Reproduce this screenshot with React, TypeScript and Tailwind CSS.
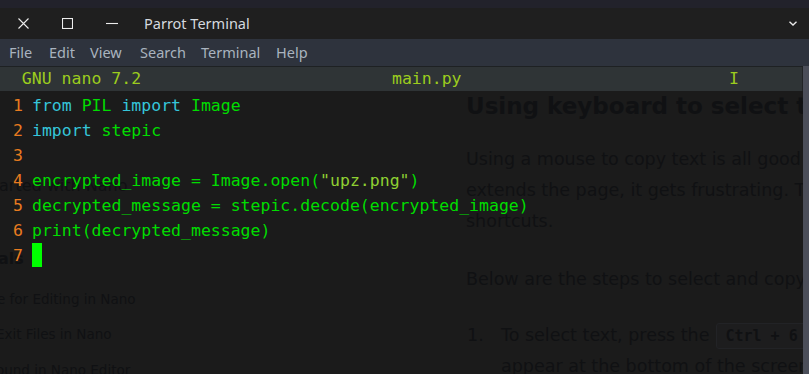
const mono = "font-['DejaVu_Sans_Mono','Liberation_Mono',monospace]";
const sans = "font-['DejaVu_Sans','Noto_Sans',sans-serif]";

type Tok = { t: string; c?: string };

const K = "text-[#35c6da]";
const G = "text-[#00dd00]";
const S = "text-[#8fd032]";

const lines: Tok[][] = [
    [{ t: "from", c: K }, { t: " PIL " }, { t: "import", c: K }, { t: " Image" }],
    [{ t: "import", c: K }, { t: " stepic" }],
    [],
    [{ t: "encrypted_image = Image.open(" }, { t: "\"upz.png\"", c: S }, { t: ")" }],
    [{ t: "decrypted_message = stepic.decode(encrypted_image)" }],
    [{ t: "print(decrypted_message)" }],
    [],
];

const BackgroundPage = () => {
    const faint = "text-[#101113]";
    return (
        <div className={`absolute inset-0 overflow-hidden flex ${sans} ${faint}`}>
            <div className="w-[466px] shrink-0 flex flex-col">
                <div className="mt-[83px] h-[24px] text-[16px] leading-[24px] ml-[-1px] whitespace-nowrap">arted with Nano</div>
                <div className="mt-[49px] text-[16px] leading-[24px] font-bold ml-[-2px]">als</div>
                <div className="mt-[16px] text-[13.5px] leading-[24px] ml-[-3px] whitespace-nowrap">e for Editing in Nano</div>
                <div className="mt-[11px] text-[13.5px] leading-[24px] ml-[-4px] whitespace-nowrap">Exit Files in Nano</div>
                <div className="mt-[12px] text-[13.5px] leading-[24px] ml-[-4px] whitespace-nowrap">ound in Nano Editor</div>
            </div>
            <div className="flex flex-col whitespace-nowrap">
                <div className="mt-[0px] text-[23px] leading-[30px] font-bold">Using keyboard to select text</div>
                <div className="mt-[23px] text-[17.5px] leading-[31px]">
                    <div>Using a mouse to copy text is all good but when the text</div>
                    <div>extends the page, it gets frustrating. That's where</div>
                    <div>shortcuts.</div>
                </div>
                <div className="mt-[27px] text-[17.5px] leading-[31px]">Below are the steps to select and copy text</div>
                <div className="mt-[25px] text-[17.5px] leading-[31px] flex">
                    <span className="w-[35px] pl-[1px]">1.</span>
                    <div className="flex flex-col">
                        <div className="flex items-center">
                            To select text, press the
                            <span className={`ml-[7px] px-[8px] border border-[#222326] bg-[#1d1d1e] rounded-[3px] font-bold text-[15px] leading-[24px] ${mono}`}>
                                Ctrl + 6
                            </span>
                        </div>
                        <div>appear at the bottom of the screen</div>
                    </div>
                </div>
            </div>
        </div>
    );
};

const App = () => {
    return (
        <div className="w-[809px] h-[374px] overflow-hidden bg-[#1b1b1b] flex flex-col">
            <div className="h-[8px] bg-[#22222b] shrink-0" />
            <div className="h-[31px] bg-[#1f1f1f] shrink-0 flex items-center relative">
                <svg className="ml-[18px]" width="11" height="11" viewBox="0 0 11 11">
                    <path d="M0.5 0.5 L10.5 10.5 M10.5 0.5 L0.5 10.5" stroke="#ececec" strokeWidth="1.1" />
                </svg>
                <svg className="ml-[33px]" width="11" height="11" viewBox="0 0 11 11">
                    <rect x="0.5" y="0.5" width="10" height="10" fill="none" stroke="#ececec" strokeWidth="1.1" />
                </svg>
                <svg className="ml-[33px]" width="12" height="11" viewBox="0 0 12 11">
                    <path d="M0 5.5 H12" stroke="#ececec" strokeWidth="1.1" />
                </svg>
                <span className="ml-[26px] text-[14.5px] text-[#d4d9df] font-['Noto_Sans',sans-serif]">Parrot Terminal</span>
                <svg className="ml-auto mr-[12px]" width="8" height="5" viewBox="0 0 8 5">
                    <path d="M0.5 0.8 L4 4 L7.5 0.8" fill="none" stroke="#e8e8e8" strokeWidth="1.4" />
                </svg>
            </div>
            <div className="h-[27px] bg-[#2e333d] shrink-0 flex items-center pl-[9px] text-[14.5px] text-[#a9b3bf] font-['Noto_Sans',sans-serif]">
                <span className="w-[40px]">File</span>
                <span className="w-[41px]">Edit</span>
                <span className="w-[50px]">View</span>
                <span className="w-[61px]">Search</span>
                <span className="w-[75px]">Terminal</span>
                <span>Help</span>
            </div>
            <div className="flex-1 flex min-h-0">
                <div className="w-[803px] flex flex-col min-h-0">
                    <div className={`h-[25px] shrink-0 bg-[#2f3436] border-t border-[#1e2123] border-r border-r-[#222426] flex items-center pl-[2px] text-[16.5px] text-[#9ccc1e] whitespace-pre relative z-10 ${mono}`}>
                        <span className="w-[390px]">  GNU nano 7.2</span>
                        <span className="w-[337px]">main.py</span>
                        <span>I</span>
                    </div>
                    <div className="flex-1 relative min-h-0 overflow-hidden">
                        <BackgroundPage />
                        <div className={`relative pt-[1.5px] pl-[3px] text-[16.5px] leading-[25px] whitespace-pre ${mono} ${G}`}>
                            {lines.map((ln, i) => (
                                <div key={i} className="flex h-[25px]">
                                    <span className="w-[29px] pl-[10px] text-[#e97b1f]">{i + 1}</span>
                                    {ln.map((tk, j) => (
                                        <span key={j} className={tk.c ?? ""}>
                                            {tk.t}
                                        </span>
                                    ))}
                                    {i === 6 && <span className="w-[10px] h-[24px] bg-[#00ff00] mt-[0.5px]" />}
                                </div>
                            ))}
                        </div>
                    </div>
                </div>
                <div className="w-[6px] bg-[#4b4e59]" />
            </div>
        </div>
    );
};

export default App;
